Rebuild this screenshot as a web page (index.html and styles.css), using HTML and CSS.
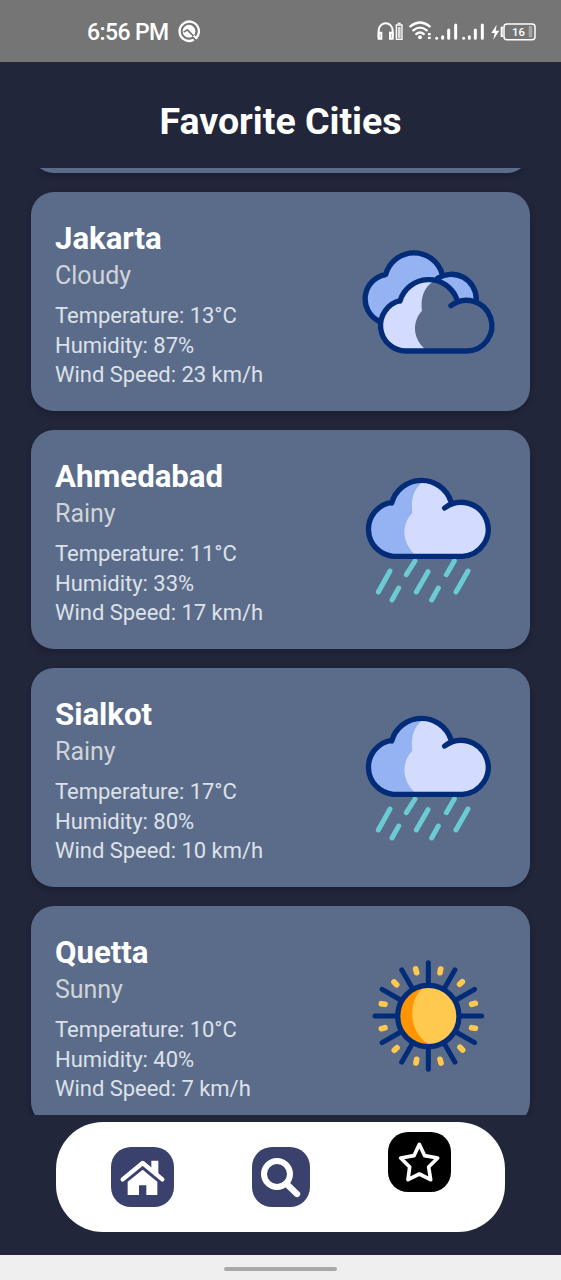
FILE: index.html
```html
<!DOCTYPE html>
<html lang="en">
<head>
<meta charset="utf-8">
<title>Favorite Cities</title>
<link rel="stylesheet" href="styles.css">
</head>
<body>
<svg class="defs" width="0" height="0" aria-hidden="true">
  <defs>
    <symbol id="rain" viewBox="48 36 375 375">
      <path fill="#d3dcfe" d="M125 112A93 93 0 0 1 303 110L306 117L335 112A81 81 0 0 1 337 274H130A81.600 81.600 0 0 1 125 112Z"/>
      <path fill="#95b2f3" d="M228 46C190 65 182 105 187 143C152 180 155 236 200 274H130A81.600 81.600 0 0 1 125 112C140 70 178 42 228 46Z"/>
      <path class="drops" d="M120 318L85 381M195 288L169 329M234 320L199 381M313 288L289 329M354 318L318 381M146 369L126 405M265 369L245 405"/>
      <path class="outline" d="M125 112A81.600 81.600 0 0 0 130 274H337A81 81 0 1 0 284 129M125 114A93 93 0 0 1 303 110"/>
    </symbol>
    <symbol id="cloud" viewBox="48 12 375 375">
      <path fill="#95b2f3" d="M90 260A74 74 0 0 1 107 118A88 88 0 0 1 276 118A75 75 0 0 1 379 196H325C305 160 285 135 236 135C195 134 160 160 150 198C115 205 88 235 90 260Z"/>
      <path class="outline" d="M86 258A74 74 0 0 1 107 119A88 88 0 0 1 277 119M263 130A75 75 0 0 1 379 192"/>
      <path fill="#5b6c8b" d="M150 198A90 90 0 0 1 320 192L324 199L349 196A76 76 0 0 1 349 348H168A76.600 76.600 0 0 1 150 197Z"/>
      <path fill="#d3dcfe" d="M254 137C220 155 211 190 216 227C184 262 188 314 232 348H168A76.600 76.600 0 0 1 150 197C165 150 205 126 254 137Z"/>
      <path class="outline" d="M150 197A76.600 76.600 0 0 0 168 348H349A76 76 0 1 0 303 212M150 198A90 90 0 0 1 320 191"/>
    </symbol>
    <symbol id="sun" viewBox="18 9 375 375">
      <g class="rays">
        <path id="ray" d="M205 105V38M205 291V358M112 198H45M298 198H365"/>
        <use href="#ray" transform="rotate(30 205 198)"/>
        <use href="#ray" transform="rotate(60 205 198)"/>
      </g>
      <g class="sparks">
        <path id="spark" d="M240 68L242 57M299 103L307 95M335 163L346 160"/>
        <use href="#spark" transform="rotate(90 205 198)"/>
        <use href="#spark" transform="rotate(180 205 198)"/>
        <use href="#spark" transform="rotate(270 205 198)"/>
      </g>
      <circle cx="205" cy="198" r="92" fill="#ffc94f"/>
      <path fill="#ff9500" d="M205 106C140 130 136 260 222 289A92 92 0 1 1 205 106Z"/>
      <circle class="outline" cx="205" cy="198" r="92"/>
    </symbol>
  </defs>
</svg>

<div class="screen">
  <header class="status">
    <span class="time">6:56 PM</span>
    <svg class="app-mark" viewBox="0 0 66 68">
      <path d="M55 53A29 29 0 1 0 45 60" fill="none" stroke="#fff" stroke-width="7" stroke-linecap="round"/>
      <circle cx="33" cy="33" r="19" fill="#fff"/>
      <path d="M17 36L28 29L52 53" fill="none" stroke="#757575" stroke-width="5"/>
      <path d="M47 47L57 56" stroke="#fff" stroke-width="6"/>
    </svg>
    <svg class="indicators" viewBox="36 34 480 69">
      <g fill="none" stroke="#fff">
        <path stroke-width="6" d="M41 84V62A20 20 0 0 1 83 62V84"/>
        <path stroke-width="6" d="M41 69H49V87H41ZM83 69H75V87H83Z"/>
        <path stroke-width="4" d="M94 46H111V89H94ZM98 41H107"/>
        <path stroke-width="9" stroke="#dedede" d="M102.500 52V86"/>
        <path stroke-width="7" stroke-linecap="round" d="M136 50Q165 27 194 50M145 62Q165 46 185 62M154 73Q165 64 176 73"/>
        <path stroke-width="9" stroke-linecap="round" d="M215 86V86.100M233 81V86M251 61V86M272 46V86M296 86V86.100M313 81V86M331 61V86M352 46V86"/>
        <rect x="417" y="43" width="93" height="47" rx="9" stroke-width="4.500"/>
        <path stroke-width="6" d="M414 54H410V79H414"/>
      </g>
      <g fill="#fff">
        <circle cx="165" cy="83" r="6"/>
        <path d="M189 70h8v7h-8zM189 81h8v7h-8zM395 45L379 70H389L385 90L403 63H392Z"/>
        <path fill="#a5a5a5" d="M491 49h11v34h-11z"/>
        <text class="charge" x="441" y="80">16</text>
      </g>
    </svg>
  </header>

  <h1 class="title">Favorite Cities</h1>

  <main class="list">
    <div class="card card-past"></div>
    <article class="card">
      <div class="info">
        <h2>Jakarta</h2>
        <p class="condition">Cloudy</p>
        <p>Temperature: 13°C</p>
        <p>Humidity: 87%</p>
        <p>Wind Speed: 23 km/h</p>
      </div>
      <svg class="weather"><use href="#cloud"/></svg>
    </article>
    <article class="card">
      <div class="info">
        <h2>Ahmedabad</h2>
        <p class="condition">Rainy</p>
        <p>Temperature: 11°C</p>
        <p>Humidity: 33%</p>
        <p>Wind Speed: 17 km/h</p>
      </div>
      <svg class="weather"><use href="#rain"/></svg>
    </article>
    <article class="card">
      <div class="info">
        <h2>Sialkot</h2>
        <p class="condition">Rainy</p>
        <p>Temperature: 17°C</p>
        <p>Humidity: 80%</p>
        <p>Wind Speed: 10 km/h</p>
      </div>
      <svg class="weather"><use href="#rain"/></svg>
    </article>
    <article class="card">
      <div class="info">
        <h2>Quetta</h2>
        <p class="condition">Sunny</p>
        <p>Temperature: 10°C</p>
        <p>Humidity: 40%</p>
        <p>Wind Speed: 7 km/h</p>
      </div>
      <svg class="weather"><use href="#sun"/></svg>
    </article>
  </main>

  <nav class="tabs">
    <a class="tab">
      <svg width="63" height="60" viewBox="0 0 189 180">
        <path fill="none" stroke="#fff" stroke-width="13" stroke-linecap="round" stroke-linejoin="round" d="M35 97L95 48L154 97"/>
        <path fill="#fff" d="M121 41H142V84L121 67ZM95 68L139 104V144H106V115H84V144H50V104Z"/>
      </svg>
    </a>
    <a class="tab tab-search">
      <svg width="58" height="60" viewBox="0 0 174 180">
        <circle cx="75" cy="81" r="39" fill="none" stroke="#fff" stroke-width="18"/>
        <path d="M107 114L135 141" stroke="#fff" stroke-width="19" stroke-linecap="round"/>
      </svg>
    </a>
    <a class="tab tab-active">
      <svg width="63" height="60" viewBox="0 0 189 180">
        <path fill="none" stroke="#fff" stroke-width="11" stroke-linejoin="round" d="M94 37L110 71L149 78L122 105L128 143L94 126L60 143L65 105L38 78L78 71Z"/>
      </svg>
    </a>
  </nav>

  <footer class="system"><span class="handle"></span></footer>
</div>
</body>
</html>
```
FILE: styles.css
```css
* { box-sizing: border-box; margin: 0; padding: 0; }
body { font-family: Roboto, sans-serif; background: #22263a; }
.defs { position: absolute; }
.screen { width: 561px; height: 1280px; display: flex; flex-direction: column; overflow: hidden; background: #22263a; }

.status { height: 62px; flex: none; display: flex; align-items: center; padding: 2px 24px 0 87px; background: #757575; color: #fff; }
.time { width: 81px; font-size: 23px; font-weight: 500; letter-spacing: -.6px; white-space: nowrap; }
.app-mark { width: 22px; height: 23px; margin: -2px 0 0 10px; }
.indicators { width: 160px; height: 23px; margin-left: auto; }
.charge { font: 500 34px Roboto, sans-serif; }

.title { height: 106px; flex: none; padding-top: 7px; line-height: 104px; text-align: center; color: #fff; font-size: 37.5px; font-weight: 700; }

.list { height: 947px; flex: none; overflow: hidden; padding: 0 31px; display: flex; flex-direction: column; gap: 19px; }
.card { flex: none; height: 219px; display: flex; align-items: center; justify-content: space-between; padding: 0 39px 0 24px; border-radius: 23px; background: #5b6c8b; box-shadow: 0 3px 5px rgba(15, 18, 35, .35); }
.card-past { margin-top: -214px; }
.info { align-self: flex-start; padding-top: 28px; color: #dde1e8; font-size: 22px; line-height: 29.7px; letter-spacing: -.03px; white-space: nowrap; }
.info h2 { color: #fff; font-size: 31.2px; line-height: 37px; font-weight: 700; }
.info .condition { margin: 4px 0 11px; color: #d0d3d8; font-size: 25px; line-height: 29px; }
.weather { width: 125px; height: 125px; overflow: visible; }
symbol { overflow: visible; }
.outline { fill: none; stroke: #022b78; stroke-width: 16px; stroke-linecap: round; stroke-linejoin: round; }
.drops { fill: none; stroke: #6acbd3; stroke-width: 15px; stroke-linecap: round; }
.rays { fill: none; stroke: #022b78; stroke-width: 15px; stroke-linecap: round; }
.sparks { fill: none; stroke: #ffc94f; stroke-width: 17px; stroke-linecap: round; }

.tabs { width: 449px; height: 110px; flex: none; margin: 7px 0 23px 56px; padding: 0 54px 0 54.500px; display: flex; align-items: center; justify-content: space-between; border-radius: 47px; background: #fff; }
.tab { display: block; width: 63px; height: 60px; border-radius: 20px; background: #3b416d; }
.tab svg { display: block; }
.tab-search { width: 58px; }
.tab-active { background: #000; margin-bottom: 31px; }

.system { flex: 1; display: flex; justify-content: center; padding-top: 12px; background: #efefef; }
.handle { width: 113px; height: 4px; border-radius: 2px; background: #a9a9a9; }
```
